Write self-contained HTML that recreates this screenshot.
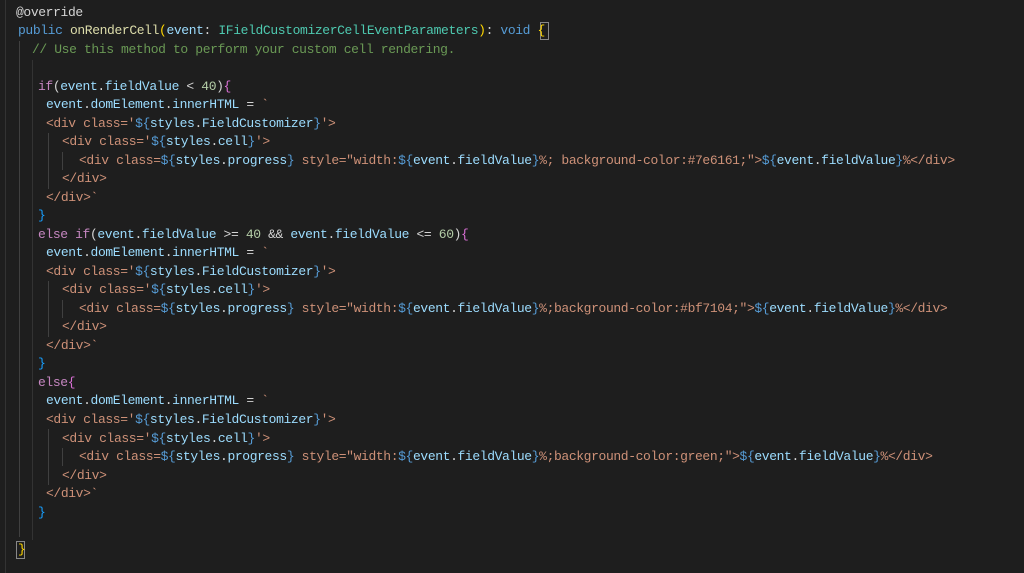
<!DOCTYPE html>
<html><head><meta charset="utf-8"><style>
html,body{margin:0;padding:0;background:#1e1e1e;width:1024px;height:573px;overflow:hidden}
.l{position:absolute;font-family:"Liberation Mono",monospace;font-size:13px;letter-spacing:-0.38px;white-space:pre;color:#d4d4d4;line-height:18px;height:18px}
.k{color:#569cd6}.f{color:#dcdcaa}.p{color:#9cdcfe}.t{color:#4ec9b0}.c{color:#6a9955}.m{color:#c586c0}.n{color:#b5cea8}.s{color:#ce9178}.g{color:#ffd700}.b{color:#179fff}.o{color:#da70d6}.w{color:#d4d4d4}
.v{position:absolute;width:1px;background:#404040}
.box{position:absolute;border:1px solid #888;box-sizing:border-box}
</style></head><body>
<div class="v" style="left:5px;top:0;height:573px;background:#333"></div>
<div class="v" style="left:19px;top:41px;height:496px"></div>
<div class="v" style="left:32px;top:60px;height:480px;background:#333"></div>
<div class="v" style="left:48px;top:133px;height:56px"></div>
<div class="v" style="left:48px;top:281px;height:56px"></div>
<div class="v" style="left:48px;top:429px;height:56px"></div>
<div class="v" style="left:62px;top:152px;height:18px"></div>
<div class="v" style="left:62px;top:300px;height:18px"></div>
<div class="v" style="left:62px;top:448px;height:18px"></div>
<div class="box" style="left:540px;top:22px;width:9px;height:18px"></div>
<div class="box" style="left:16px;top:541px;width:9px;height:18px"></div>
<div id="c"></div>
<script>
const L=[
[16,'@override'],
[18,'<span class="k">public</span> <span class="f">onRenderCell</span><span class="g">(</span><span class="p">event</span>: <span class="t">IFieldCustomizerCellEventParameters</span><span class="g">)</span>: <span class="k">void</span> <span class="g">{</span>'],
[32,'<span class="c">// Use this method to perform your custom cell rendering.</span>'],
[0,''],
[38,'<span class="m">if</span><span class="w">(</span><span class="p">event</span>.<span class="p">fieldValue</span> &lt; <span class="n">40</span><span class="w">)</span><span class="o">{</span>'],
[46,'<span class="p">event</span>.<span class="p">domElement</span>.<span class="p">innerHTML</span> = <span class="s">`</span>'],
[46,'<span class="s">&lt;div class=\'</span><span class="k">${</span><span class="p">styles</span>.<span class="p">FieldCustomizer</span><span class="k">}</span><span class="s">\'&gt;</span>'],
[62,'<span class="s">&lt;div class=\'</span><span class="k">${</span><span class="p">styles</span>.<span class="p">cell</span><span class="k">}</span><span class="s">\'&gt;</span>'],
[79,'<span class="s">&lt;div class=</span><span class="k">${</span><span class="p">styles</span>.<span class="p">progress</span><span class="k">}</span><span class="s"> style="width:</span><span class="k">${</span><span class="p">event</span>.<span class="p">fieldValue</span><span class="k">}</span><span class="s">%; background-color:#7e6161;"&gt;</span><span class="k">${</span><span class="p">event</span>.<span class="p">fieldValue</span><span class="k">}</span><span class="s">%&lt;/div&gt;</span>'],
[62,'<span class="s">&lt;/div&gt;</span>'],
[46,'<span class="s">&lt;/div&gt;`</span>'],
[38,'<span class="b">}</span>'],
[38,'<span class="m">else</span> <span class="m">if</span><span class="w">(</span><span class="p">event</span>.<span class="p">fieldValue</span> &gt;= <span class="n">40</span> &amp;&amp; <span class="p">event</span>.<span class="p">fieldValue</span> &lt;= <span class="n">60</span><span class="w">)</span><span class="o">{</span>'],
[46,'<span class="p">event</span>.<span class="p">domElement</span>.<span class="p">innerHTML</span> = <span class="s">`</span>'],
[46,'<span class="s">&lt;div class=\'</span><span class="k">${</span><span class="p">styles</span>.<span class="p">FieldCustomizer</span><span class="k">}</span><span class="s">\'&gt;</span>'],
[62,'<span class="s">&lt;div class=\'</span><span class="k">${</span><span class="p">styles</span>.<span class="p">cell</span><span class="k">}</span><span class="s">\'&gt;</span>'],
[79,'<span class="s">&lt;div class=</span><span class="k">${</span><span class="p">styles</span>.<span class="p">progress</span><span class="k">}</span><span class="s"> style="width:</span><span class="k">${</span><span class="p">event</span>.<span class="p">fieldValue</span><span class="k">}</span><span class="s">%;background-color:#bf7104;"&gt;</span><span class="k">${</span><span class="p">event</span>.<span class="p">fieldValue</span><span class="k">}</span><span class="s">%&lt;/div&gt;</span>'],
[62,'<span class="s">&lt;/div&gt;</span>'],
[46,'<span class="s">&lt;/div&gt;`</span>'],
[38,'<span class="b">}</span>'],
[38,'<span class="m">else</span><span class="o">{</span>'],
[46,'<span class="p">event</span>.<span class="p">domElement</span>.<span class="p">innerHTML</span> = <span class="s">`</span>'],
[46,'<span class="s">&lt;div class=\'</span><span class="k">${</span><span class="p">styles</span>.<span class="p">FieldCustomizer</span><span class="k">}</span><span class="s">\'&gt;</span>'],
[62,'<span class="s">&lt;div class=\'</span><span class="k">${</span><span class="p">styles</span>.<span class="p">cell</span><span class="k">}</span><span class="s">\'&gt;</span>'],
[79,'<span class="s">&lt;div class=</span><span class="k">${</span><span class="p">styles</span>.<span class="p">progress</span><span class="k">}</span><span class="s"> style="width:</span><span class="k">${</span><span class="p">event</span>.<span class="p">fieldValue</span><span class="k">}</span><span class="s">%;background-color:green;"&gt;</span><span class="k">${</span><span class="p">event</span>.<span class="p">fieldValue</span><span class="k">}</span><span class="s">%&lt;/div&gt;</span>'],
[62,'<span class="s">&lt;/div&gt;</span>'],
[46,'<span class="s">&lt;/div&gt;`</span>'],
[38,'<span class="b">}</span>'],
[0,''],
[18,'<span class="g">}</span>']
];
let h='';
L.forEach((x,i)=>{h+='<div class="l" style="left:'+x[0]+'px;top:'+(3.5+i*18.52).toFixed(1)+'px">'+x[1]+'</div>';});
document.getElementById('c').innerHTML=h;
</script>
</body></html>
